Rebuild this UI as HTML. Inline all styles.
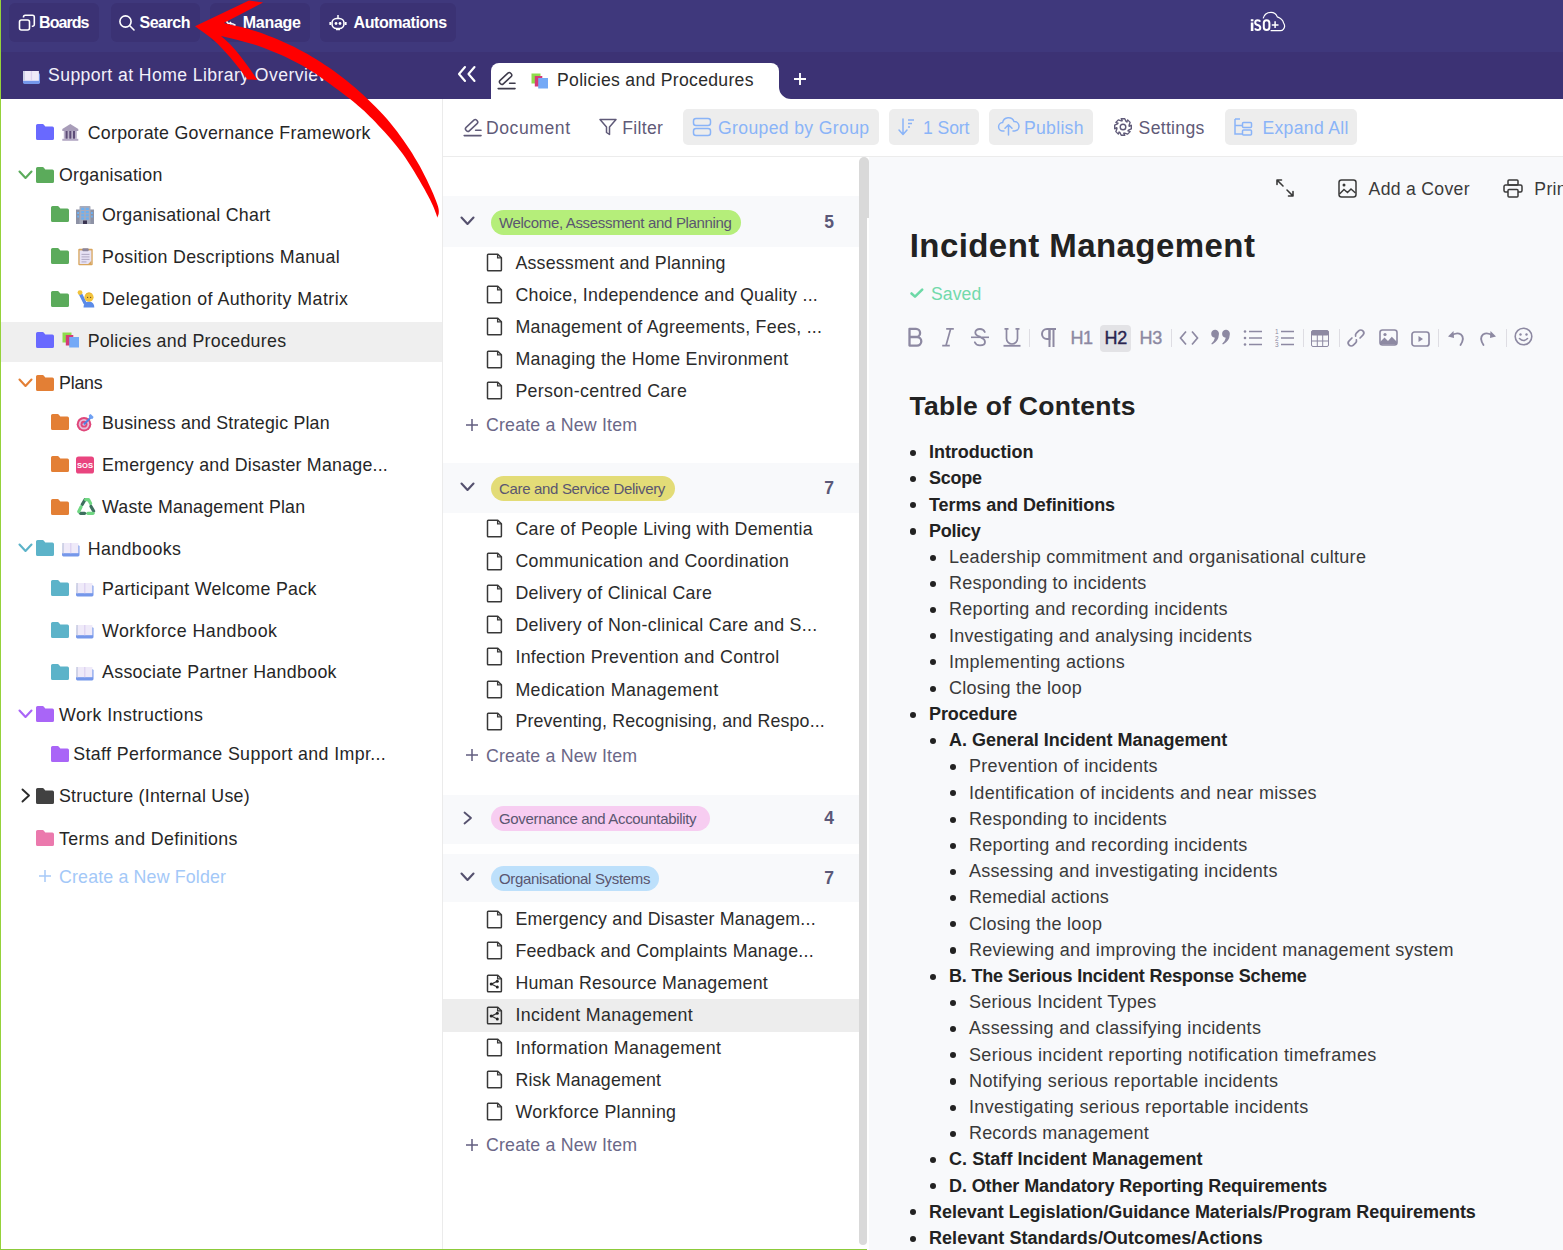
<!DOCTYPE html>
<html><head><meta charset="utf-8"><title>Incident Management</title>
<style>
html,body{margin:0;padding:0;width:1563px;height:1250px;overflow:hidden;background:#fff;}
body{position:relative;font-family:"Liberation Sans", sans-serif;}
.t{position:absolute;white-space:nowrap;font-family:"Liberation Sans", sans-serif;}
.b{position:absolute;}
svg.b{overflow:visible;}
</style></head><body>
<div class="b" style="left:0.0px;top:0.0px;width:1563.0px;height:1250.0px;background:#ffffff;"></div>
<div class="b" style="left:869.0px;top:157.0px;width:694.0px;height:1093.0px;background:#f8f9fb;"></div>
<div class="b" style="left:0.0px;top:0.0px;width:1563.0px;height:52.0px;background:#3f387c;"></div>
<div class="b" style="left:0.0px;top:52.0px;width:1563.0px;height:47.0px;background:#3c3274;"></div>
<div class="b" style="left:9.3px;top:2.6px;width:90.2px;height:39.0px;background:#3b3274;border-radius:6px;"></div>
<div class="b" style="left:110.7px;top:2.6px;width:89.1px;height:39.0px;background:#3b3274;border-radius:6px;"></div>
<div class="b" style="left:209.8px;top:2.6px;width:99.9px;height:39.0px;background:#3b3274;border-radius:6px;"></div>
<div class="b" style="left:320.2px;top:2.6px;width:136.2px;height:39.0px;background:#3b3274;border-radius:6px;"></div>
<svg class="b" style="left:18.0px;top:14.0px;" width="18" height="18" viewBox="0 0 18 18"><rect x="1.5" y="6" width="10" height="10" rx="2" fill="none" stroke="#fff" stroke-width="1.6"/><path d="M5.5 3.5 V3 a1.8 1.8 0 0 1 1.8-1.8 H14.5 a1.8 1.8 0 0 1 1.8 1.8 V10.5 a1.8 1.8 0 0 1 -1.8 1.8 H13.8" fill="none" stroke="#fff" stroke-width="1.6"/></svg>
<div class="t" style="left:39.0px;top:14.7px;font-size:16px;line-height:16px;color:#ffffff;font-weight:700;letter-spacing:-0.925px;">Boards</div>
<svg class="b" style="left:118.0px;top:14.0px;" width="18" height="18" viewBox="0 0 18 18"><circle cx="7.5" cy="7.5" r="5.6" fill="none" stroke="#fff" stroke-width="1.6"/><path d="M11.8 11.8 L16 16" stroke="#fff" stroke-width="1.6" stroke-linecap="round"/></svg>
<div class="t" style="left:139.5px;top:14.7px;font-size:16px;line-height:16px;color:#ffffff;font-weight:700;letter-spacing:-0.475px;">Search</div>
<svg class="b" style="left:220.0px;top:14.0px;" width="18" height="18" viewBox="0 0 18 18"><path d="M3 8 q2-3 4 0 q2 3 4 0" fill="none" stroke="#fff" stroke-width="1.5"/><path d="M10 10 q3 -1 5 1 q-2 2 -5 1" fill="none" stroke="#fff" stroke-width="1.5"/></svg>
<div class="t" style="left:242.8px;top:14.7px;font-size:16px;line-height:16px;color:#ffffff;font-weight:700;letter-spacing:-0.296px;">Manage</div>
<svg class="b" style="left:329.0px;top:14.0px;" width="18" height="18" viewBox="0 0 18 18"><path d="M9 1 V4" stroke="#fff" stroke-width="1.5"/><rect x="3" y="4.5" width="12" height="10" rx="4.5" fill="none" stroke="#fff" stroke-width="1.6"/><circle cx="7" cy="9.5" r="1.4" fill="#fff"/><circle cx="11" cy="9.5" r="1.4" fill="#fff"/><path d="M1.2 8 V11 M16.8 8 V11" stroke="#fff" stroke-width="1.6"/><path d="M7 15.5 H11" stroke="#fff" stroke-width="1.5"/></svg>
<div class="t" style="left:353.5px;top:14.7px;font-size:16px;line-height:16px;color:#ffffff;font-weight:700;letter-spacing:-0.418px;">Automations</div>
<svg class="b" style="left:1245px;top:8px" width="45" height="28" viewBox="1245 8 45 28"><rect x="1250.8" y="19.2" width="2.6" height="2.1" fill="#fff"/><rect x="1250.8" y="22.5" width="2.6" height="8.5" fill="#fff"/><path d="M1260.2 21.6 Q1259.6 20.2 1257.7 20.2 Q1255.2 20.2 1255.2 22.5 Q1255.2 24.3 1257.6 25 Q1260.3 25.8 1260.3 27.8 Q1260.3 30 1257.6 30 Q1255.6 30 1255 28.4" fill="none" stroke="#fff" stroke-width="2"/><rect x="1263.8" y="20.2" width="5.6" height="9.8" rx="2.8" fill="none" stroke="#fff" stroke-width="2"/><path d="M1275.1 21.2 V28 M1271.8 25 H1278.5" stroke="#fff" stroke-width="1.5"/><path d="M1263.2 18.4 Q1264.5 12.3 1271 12.3 Q1275.6 12.3 1277.3 16.9 Q1282.6 18.8 1283.6 23 Q1285.8 26.5 1283.3 29.3 Q1282.2 30.6 1280.5 30.6 H1270.6" fill="none" stroke="#fff" stroke-width="1.2"/></svg>
<svg class="b" style="left:23.0px;top:70.5px;" width="17" height="13" viewBox="0 0 17 13"><rect x="0" y="2.2" width="17" height="10.8" rx="1.4" fill="#7597ea"/><rect x="0.2" y="0" width="15.7" height="9.8" fill="#efeaf9"/><rect x="0.2" y="0" width="1.8" height="9.8" fill="#cfd2e6"/><rect x="7.8" y="0" width="1.3" height="9.8" fill="#ddd2f1"/></svg>
<div class="t" style="left:48.0px;top:67.1px;font-size:17.6px;line-height:17.6px;color:#f2f0fa;font-weight:400;letter-spacing:0.429px;">Support at Home Library Overview</div>
<svg class="b" style="left:457.0px;top:65.0px;" width="22" height="18" viewBox="0 0 22 18"><path d="M8 2 L2 9 L8 16 M17.5 2 L11.5 9 L17.5 16" fill="none" stroke="#fff" stroke-width="2.1" stroke-linecap="round" stroke-linejoin="round"/></svg>
<div class="b" style="left:490.5px;top:62.5px;width:288.5px;height:37px;background:#fff;border-radius:8px 8px 0 0;"></div>
<svg class="b" style="left:779.0px;top:87.0px;" width="12" height="12" viewBox="0 0 12 12"><path d="M0 0 V12 H12 A12 12 0 0 1 0 0 Z" fill="#fff"/></svg>
<svg class="b" style="left:494.0px;top:66.0px;" width="28" height="28" viewBox="0 0 28 28"><rect x="-7.3" y="-2.35" width="14.6" height="4.7" rx="2" transform="translate(11.6,12.5) rotate(-43)" fill="none" stroke="#3d3a4a" stroke-width="1.5"/><path d="M15.6 17.3 H21" stroke="#3d3a4a" stroke-width="1.6" stroke-linecap="round"/><path d="M4.2 22.6 H21" stroke="#3d3a4a" stroke-width="1.6" stroke-linecap="round"/></svg>
<svg class="b" style="left:531.0px;top:73.0px;" width="18" height="16" viewBox="0 0 18 16"><rect x="0.5" y="0.5" width="9" height="10" fill="#8fdc4c"/><rect x="3.8" y="3" width="7.5" height="10.5" fill="#d43a78"/><rect x="7.2" y="5" width="9.8" height="10.5" fill="#74a9f6"/></svg>
<div class="t" style="left:557.0px;top:72.1px;font-size:17.6px;line-height:17.6px;color:#2b2b2b;font-weight:400;letter-spacing:0.308px;">Policies and Procedures</div>
<svg class="b" style="left:792.0px;top:70.5px;" width="16" height="16" viewBox="0 0 16 16"><path d="M8 2 V14 M2 8 H14" stroke="#fff" stroke-width="1.9"/></svg>
<div class="b" style="left:442.0px;top:99.0px;width:1.0px;height:1151.0px;background:#ebebeb;"></div>
<div class="b" style="left:1.0px;top:322.0px;width:441.0px;height:40.0px;background:#efefef;"></div>
<svg class="b" style="left:36.2px;top:124.3px;" width="18" height="16" viewBox="0 0 18 16"><path d="M1.6 0 H6.6 Q7.4 0 7.9 0.7 L9.3 2.6 H16.4 Q18 2.6 18 4.2 V14.4 Q18 16 16.4 16 H1.6 Q0 16 0 14.4 V1.6 Q0 0 1.6 0 Z" fill="#6969ff"/></svg>
<svg class="b" style="left:61.7px;top:123.8px;" width="17" height="18" viewBox="0 0 17 18"><path d="M8.3 0 L16.3 5 V7 H0.3 V5 Z" fill="#a89db9"/><rect x="1.8" y="7" width="13" height="7.8" fill="#b9b0c8"/><rect x="3.6" y="7" width="2" height="7.8" fill="#5e4d78"/><rect x="7.3" y="7" width="2" height="7.8" fill="#5e4d78"/><rect x="11" y="7" width="2" height="7.8" fill="#5e4d78"/><rect x="0.3" y="14.8" width="16" height="2" fill="#b3a9c4"/></svg>
<div class="t" style="left:87.7px;top:125.1px;font-size:17.8px;line-height:17.8px;color:#262626;font-weight:400;letter-spacing:0.278px;">Corporate Governance Framework</div>
<svg class="b" style="left:36.2px;top:167.0px;" width="18" height="16" viewBox="0 0 18 16"><path d="M1.6 0 H6.6 Q7.4 0 7.9 0.7 L9.3 2.6 H16.4 Q18 2.6 18 4.2 V14.4 Q18 16 16.4 16 H1.6 Q0 16 0 14.4 V1.6 Q0 0 1.6 0 Z" fill="#5bab5b"/></svg>
<svg class="b" style="left:17.5px;top:169.8px;" width="15" height="10" viewBox="0 0 15 10"><path d="M1.5 1.5 L7.5 8 L13.5 1.5" fill="none" stroke="#5bab5b" stroke-width="2.1" stroke-linecap="round" stroke-linejoin="round"/></svg>
<div class="t" style="left:59.0px;top:167.4px;font-size:17.8px;line-height:17.8px;color:#262626;font-weight:400;letter-spacing:0.225px;">Organisation</div>
<svg class="b" style="left:50.5px;top:206.3px;" width="18" height="16" viewBox="0 0 18 16"><path d="M1.6 0 H6.6 Q7.4 0 7.9 0.7 L9.3 2.6 H16.4 Q18 2.6 18 4.2 V14.4 Q18 16 16.4 16 H1.6 Q0 16 0 14.4 V1.6 Q0 0 1.6 0 Z" fill="#5bab5b"/></svg>
<svg class="b" style="left:76.0px;top:205.8px;" width="18" height="18" viewBox="0 0 18 18"><rect x="0" y="3.5" width="4.5" height="14.5" fill="#8d92a5"/><rect x="13.5" y="3.5" width="4.5" height="14.5" fill="#8d92a5"/><rect x="3.5" y="0" width="11" height="18" rx="0.8" fill="#a7abbb"/><g fill="#6cb0f2"><rect x="5.2" y="1.8" width="3" height="2.2"/><rect x="9.8" y="1.8" width="3" height="2.2"/><rect x="5.2" y="5" width="3" height="2.2"/><rect x="9.8" y="5" width="3" height="2.2"/><rect x="5.2" y="8.2" width="3" height="2.2"/><rect x="9.8" y="8.2" width="3" height="2.2"/><rect x="5.2" y="11.4" width="3" height="2.2"/><rect x="9.8" y="11.4" width="3" height="2.2"/><rect x="1.2" y="6" width="1.8" height="2"/><rect x="1.2" y="9.5" width="1.8" height="2"/><rect x="15" y="6" width="1.8" height="2"/><rect x="15" y="9.5" width="1.8" height="2"/></g><rect x="7" y="14.5" width="4" height="3.5" fill="#3a3450"/></svg>
<div class="t" style="left:102.0px;top:206.7px;font-size:17.8px;line-height:17.8px;color:#262626;font-weight:400;letter-spacing:0.274px;">Organisational Chart</div>
<svg class="b" style="left:50.5px;top:248.0px;" width="18" height="16" viewBox="0 0 18 16"><path d="M1.6 0 H6.6 Q7.4 0 7.9 0.7 L9.3 2.6 H16.4 Q18 2.6 18 4.2 V14.4 Q18 16 16.4 16 H1.6 Q0 16 0 14.4 V1.6 Q0 0 1.6 0 Z" fill="#5bab5b"/></svg>
<svg class="b" style="left:76.5px;top:247.5px;" width="17" height="18" viewBox="0 0 17 18"><rect x="1.3" y="0.8" width="14.4" height="16.5" rx="1" fill="#d8a55c"/><rect x="2.6" y="2.4" width="11.8" height="13.6" fill="#e7e2f4"/><path d="M11.2 16 L14.4 12.8 V16 Z" fill="#d8a55c"/><rect x="5.3" y="0.3" width="6.4" height="3" rx="1" fill="#8b859b"/><path d="M4.5 6.4 H12.5 M4.5 8.9 H12.5 M4.5 11.4 H12.5 M4.5 13.9 H9.5" stroke="#aaa3bd" stroke-width="0.9"/></svg>
<div class="t" style="left:102.0px;top:248.7px;font-size:17.8px;line-height:17.8px;color:#262626;font-weight:400;letter-spacing:0.311px;">Position Descriptions Manual</div>
<svg class="b" style="left:50.5px;top:290.5px;" width="18" height="16" viewBox="0 0 18 16"><path d="M1.6 0 H6.6 Q7.4 0 7.9 0.7 L9.3 2.6 H16.4 Q18 2.6 18 4.2 V14.4 Q18 16 16.4 16 H1.6 Q0 16 0 14.4 V1.6 Q0 0 1.6 0 Z" fill="#5bab5b"/></svg>
<svg class="b" style="left:76.5px;top:290.0px;" width="18" height="18" viewBox="0 0 18 18"><path d="M6.5 17.5 Q6.5 11.8 12 11.5 Q17.3 11.8 17.3 17.5 Z" fill="#5b8be8"/><path d="M3 3 L8 13" stroke="#5b8be8" stroke-width="3.4" stroke-linecap="round"/><circle cx="3" cy="2.6" r="2.4" fill="#f2c33c"/><circle cx="12" cy="7.2" r="4.6" fill="#f2c33c"/><path d="M8 5.5 Q11 1.5 16 4.5 Q15 3 12 2.6 Q9 2.7 8 5.5 Z" fill="#e2a92a"/><circle cx="10.6" cy="7.4" r="0.6" fill="#6b4a2a"/><circle cx="13.6" cy="7.4" r="0.6" fill="#6b4a2a"/></svg>
<div class="t" style="left:102.0px;top:290.9px;font-size:17.8px;line-height:17.8px;color:#262626;font-weight:400;letter-spacing:0.474px;">Delegation of Authority Matrix</div>
<svg class="b" style="left:36.2px;top:332.0px;" width="18" height="16" viewBox="0 0 18 16"><path d="M1.6 0 H6.6 Q7.4 0 7.9 0.7 L9.3 2.6 H16.4 Q18 2.6 18 4.2 V14.4 Q18 16 16.4 16 H1.6 Q0 16 0 14.4 V1.6 Q0 0 1.6 0 Z" fill="#6969ff"/></svg>
<svg class="b" style="left:62.2px;top:332.0px;" width="18" height="16" viewBox="0 0 18 16"><rect x="0.5" y="0.5" width="9" height="10" fill="#8fdc4c"/><rect x="3.8" y="3" width="7.5" height="10.5" fill="#d43a78"/><rect x="7.2" y="5" width="9.8" height="10.5" fill="#74a9f6"/></svg>
<div class="t" style="left:87.7px;top:332.9px;font-size:17.8px;line-height:17.8px;color:#262626;font-weight:400;letter-spacing:0.302px;">Policies and Procedures</div>
<svg class="b" style="left:36.2px;top:375.0px;" width="18" height="16" viewBox="0 0 18 16"><path d="M1.6 0 H6.6 Q7.4 0 7.9 0.7 L9.3 2.6 H16.4 Q18 2.6 18 4.2 V14.4 Q18 16 16.4 16 H1.6 Q0 16 0 14.4 V1.6 Q0 0 1.6 0 Z" fill="#e37f35"/></svg>
<svg class="b" style="left:17.5px;top:377.8px;" width="15" height="10" viewBox="0 0 15 10"><path d="M1.5 1.5 L7.5 8 L13.5 1.5" fill="none" stroke="#e37f35" stroke-width="2.1" stroke-linecap="round" stroke-linejoin="round"/></svg>
<div class="t" style="left:59.0px;top:374.9px;font-size:17.8px;line-height:17.8px;color:#262626;font-weight:400;letter-spacing:-0.196px;">Plans</div>
<svg class="b" style="left:50.5px;top:414.3px;" width="18" height="16" viewBox="0 0 18 16"><path d="M1.6 0 H6.6 Q7.4 0 7.9 0.7 L9.3 2.6 H16.4 Q18 2.6 18 4.2 V14.4 Q18 16 16.4 16 H1.6 Q0 16 0 14.4 V1.6 Q0 0 1.6 0 Z" fill="#e37f35"/></svg>
<svg class="b" style="left:76.0px;top:413.8px;" width="18" height="18" viewBox="0 0 18 18"><circle cx="8" cy="10.2" r="7.3" fill="#e0467a"/><circle cx="8" cy="10.2" r="5.3" fill="#e8bcd8"/><circle cx="8" cy="10.2" r="3.4" fill="#e0467a"/><circle cx="8" cy="10.2" r="1.5" fill="#cdb8dc"/><path d="M8 10.2 L14.5 3.8" stroke="#4f7fe0" stroke-width="2"/><path d="M12.8 1.2 L14.6 0 L17.6 3 L16.4 5 L13.2 4.6 Z" fill="#6ea0f3"/></svg>
<div class="t" style="left:102.0px;top:415.3px;font-size:17.8px;line-height:17.8px;color:#262626;font-weight:400;letter-spacing:0.200px;">Business and Strategic Plan</div>
<svg class="b" style="left:50.5px;top:456.3px;" width="18" height="16" viewBox="0 0 18 16"><path d="M1.6 0 H6.6 Q7.4 0 7.9 0.7 L9.3 2.6 H16.4 Q18 2.6 18 4.2 V14.4 Q18 16 16.4 16 H1.6 Q0 16 0 14.4 V1.6 Q0 0 1.6 0 Z" fill="#e37f35"/></svg>
<svg class="b" style="left:76.0px;top:455.8px;" width="18" height="18" viewBox="0 0 18 18"><rect x="0" y="0.5" width="18" height="17" rx="2.6" fill="#e9457f"/><text x="9" y="12.1" text-anchor="middle" font-family="Liberation Sans" font-weight="700" font-size="7.6" fill="#fff">SOS</text></svg>
<div class="t" style="left:102.0px;top:457.3px;font-size:17.8px;line-height:17.8px;color:#262626;font-weight:400;letter-spacing:0.228px;">Emergency and Disaster Manage...</div>
<svg class="b" style="left:50.5px;top:498.7px;" width="18" height="16" viewBox="0 0 18 16"><path d="M1.6 0 H6.6 Q7.4 0 7.9 0.7 L9.3 2.6 H16.4 Q18 2.6 18 4.2 V14.4 Q18 16 16.4 16 H1.6 Q0 16 0 14.4 V1.6 Q0 0 1.6 0 Z" fill="#e37f35"/></svg>
<svg class="b" style="left:76.5px;top:498.2px;" width="18" height="18" viewBox="0 0 18 18"><path d="M5.2 6.5 L8 1.8" stroke="#3d6f5e" stroke-width="3.2" stroke-linecap="round"/><path d="M8.6 1.6 L11.5 1.6 L13.6 5.6" stroke="#6fd782" stroke-width="3.2" stroke-linecap="round" stroke-linejoin="round"/><path d="M14 8.5 L16.6 13" stroke="#3d6f5e" stroke-width="3.2" stroke-linecap="round"/><path d="M16 15.3 L10.8 15.3" stroke="#6fd782" stroke-width="3.2" stroke-linecap="round"/><path d="M7.6 15.3 L3.5 15.3" stroke="#3d6f5e" stroke-width="3.2" stroke-linecap="round"/><path d="M1.8 13.5 L4 9" stroke="#6fd782" stroke-width="3.2" stroke-linecap="round"/></svg>
<div class="t" style="left:102.0px;top:499.3px;font-size:17.8px;line-height:17.8px;color:#262626;font-weight:400;letter-spacing:0.205px;">Waste Management Plan</div>
<svg class="b" style="left:36.2px;top:540.3px;" width="18" height="16" viewBox="0 0 18 16"><path d="M1.6 0 H6.6 Q7.4 0 7.9 0.7 L9.3 2.6 H16.4 Q18 2.6 18 4.2 V14.4 Q18 16 16.4 16 H1.6 Q0 16 0 14.4 V1.6 Q0 0 1.6 0 Z" fill="#5cb3c9"/></svg>
<svg class="b" style="left:17.5px;top:543.1px;" width="15" height="10" viewBox="0 0 15 10"><path d="M1.5 1.5 L7.5 8 L13.5 1.5" fill="none" stroke="#5cb3c9" stroke-width="2.1" stroke-linecap="round" stroke-linejoin="round"/></svg>
<svg class="b" style="left:61.9px;top:543.3px;" width="17.5" height="13.4" viewBox="0 0 17.5 13.4"><rect x="0" y="2.2" width="17.5" height="11.2" rx="1.4" fill="#7597ea"/><rect x="0.2" y="0" width="16.2" height="10.2" fill="#efeaf9"/><rect x="0.2" y="0" width="1.8" height="10.2" fill="#cfd2e6"/><rect x="8.1" y="0" width="1.3" height="10.2" fill="#ddd2f1"/></svg>
<div class="t" style="left:87.7px;top:540.5px;font-size:17.8px;line-height:17.8px;color:#262626;font-weight:400;letter-spacing:0.416px;">Handbooks</div>
<svg class="b" style="left:50.5px;top:580.2px;" width="18" height="16" viewBox="0 0 18 16"><path d="M1.6 0 H6.6 Q7.4 0 7.9 0.7 L9.3 2.6 H16.4 Q18 2.6 18 4.2 V14.4 Q18 16 16.4 16 H1.6 Q0 16 0 14.4 V1.6 Q0 0 1.6 0 Z" fill="#5cb3c9"/></svg>
<svg class="b" style="left:76.2px;top:583.2px;" width="17.5" height="13.4" viewBox="0 0 17.5 13.4"><rect x="0" y="2.2" width="17.5" height="11.2" rx="1.4" fill="#7597ea"/><rect x="0.2" y="0" width="16.2" height="10.2" fill="#efeaf9"/><rect x="0.2" y="0" width="1.8" height="10.2" fill="#cfd2e6"/><rect x="8.1" y="0" width="1.3" height="10.2" fill="#ddd2f1"/></svg>
<div class="t" style="left:102.0px;top:580.9px;font-size:17.8px;line-height:17.8px;color:#262626;font-weight:400;letter-spacing:0.313px;">Participant Welcome Pack</div>
<svg class="b" style="left:50.5px;top:622.2px;" width="18" height="16" viewBox="0 0 18 16"><path d="M1.6 0 H6.6 Q7.4 0 7.9 0.7 L9.3 2.6 H16.4 Q18 2.6 18 4.2 V14.4 Q18 16 16.4 16 H1.6 Q0 16 0 14.4 V1.6 Q0 0 1.6 0 Z" fill="#5cb3c9"/></svg>
<svg class="b" style="left:76.2px;top:625.2px;" width="17.5" height="13.4" viewBox="0 0 17.5 13.4"><rect x="0" y="2.2" width="17.5" height="11.2" rx="1.4" fill="#7597ea"/><rect x="0.2" y="0" width="16.2" height="10.2" fill="#efeaf9"/><rect x="0.2" y="0" width="1.8" height="10.2" fill="#cfd2e6"/><rect x="8.1" y="0" width="1.3" height="10.2" fill="#ddd2f1"/></svg>
<div class="t" style="left:102.0px;top:622.5px;font-size:17.8px;line-height:17.8px;color:#262626;font-weight:400;letter-spacing:0.482px;">Workforce Handbook</div>
<svg class="b" style="left:50.5px;top:663.9px;" width="18" height="16" viewBox="0 0 18 16"><path d="M1.6 0 H6.6 Q7.4 0 7.9 0.7 L9.3 2.6 H16.4 Q18 2.6 18 4.2 V14.4 Q18 16 16.4 16 H1.6 Q0 16 0 14.4 V1.6 Q0 0 1.6 0 Z" fill="#5cb3c9"/></svg>
<svg class="b" style="left:76.2px;top:666.9px;" width="17.5" height="13.4" viewBox="0 0 17.5 13.4"><rect x="0" y="2.2" width="17.5" height="11.2" rx="1.4" fill="#7597ea"/><rect x="0.2" y="0" width="16.2" height="10.2" fill="#efeaf9"/><rect x="0.2" y="0" width="1.8" height="10.2" fill="#cfd2e6"/><rect x="8.1" y="0" width="1.3" height="10.2" fill="#ddd2f1"/></svg>
<div class="t" style="left:102.0px;top:664.4px;font-size:17.8px;line-height:17.8px;color:#262626;font-weight:400;letter-spacing:0.326px;">Associate Partner Handbook</div>
<svg class="b" style="left:36.2px;top:706.2px;" width="18" height="16" viewBox="0 0 18 16"><path d="M1.6 0 H6.6 Q7.4 0 7.9 0.7 L9.3 2.6 H16.4 Q18 2.6 18 4.2 V14.4 Q18 16 16.4 16 H1.6 Q0 16 0 14.4 V1.6 Q0 0 1.6 0 Z" fill="#a965f7"/></svg>
<svg class="b" style="left:17.5px;top:709.0px;" width="15" height="10" viewBox="0 0 15 10"><path d="M1.5 1.5 L7.5 8 L13.5 1.5" fill="none" stroke="#a965f7" stroke-width="2.1" stroke-linecap="round" stroke-linejoin="round"/></svg>
<div class="t" style="left:59.0px;top:706.6px;font-size:17.8px;line-height:17.8px;color:#262626;font-weight:400;letter-spacing:0.429px;">Work Instructions</div>
<svg class="b" style="left:50.5px;top:746.2px;" width="18" height="16" viewBox="0 0 18 16"><path d="M1.6 0 H6.6 Q7.4 0 7.9 0.7 L9.3 2.6 H16.4 Q18 2.6 18 4.2 V14.4 Q18 16 16.4 16 H1.6 Q0 16 0 14.4 V1.6 Q0 0 1.6 0 Z" fill="#a965f7"/></svg>
<div class="t" style="left:73.3px;top:746.4px;font-size:17.8px;line-height:17.8px;color:#262626;font-weight:400;letter-spacing:0.371px;">Staff Performance Support and Impr...</div>
<svg class="b" style="left:36.2px;top:787.7px;" width="18" height="16" viewBox="0 0 18 16"><path d="M1.6 0 H6.6 Q7.4 0 7.9 0.7 L9.3 2.6 H16.4 Q18 2.6 18 4.2 V14.4 Q18 16 16.4 16 H1.6 Q0 16 0 14.4 V1.6 Q0 0 1.6 0 Z" fill="#414141"/></svg>
<svg class="b" style="left:21.0px;top:788.2px;" width="10" height="15" viewBox="0 0 10 15"><path d="M1.5 1.5 L8 7.5 L1.5 13.5" fill="none" stroke="#2b2b2b" stroke-width="1.9" stroke-linecap="round" stroke-linejoin="round"/></svg>
<div class="t" style="left:59.0px;top:788.1px;font-size:17.8px;line-height:17.8px;color:#262626;font-weight:400;letter-spacing:0.252px;">Structure (Internal Use)</div>
<svg class="b" style="left:36.2px;top:830.4px;" width="18" height="16" viewBox="0 0 18 16"><path d="M1.6 0 H6.6 Q7.4 0 7.9 0.7 L9.3 2.6 H16.4 Q18 2.6 18 4.2 V14.4 Q18 16 16.4 16 H1.6 Q0 16 0 14.4 V1.6 Q0 0 1.6 0 Z" fill="#eb79ad"/></svg>
<div class="t" style="left:59.0px;top:831.2px;font-size:17.8px;line-height:17.8px;color:#262626;font-weight:400;letter-spacing:0.376px;">Terms and Definitions</div>
<svg class="b" style="left:38.0px;top:869.0px;" width="14" height="14" viewBox="0 0 14 14"><path d="M7 1 V13 M1 7 H13" stroke="#a7c9f7" stroke-width="1.5"/></svg>
<div class="t" style="left:59.0px;top:868.5px;font-size:17.8px;line-height:17.8px;color:#a3c8f8;font-weight:400;letter-spacing:0.163px;">Create a New Folder</div>
<div class="b" style="left:443.0px;top:156.0px;width:1120.0px;height:1.0px;background:#ececec;"></div>
<svg class="b" style="left:459.7px;top:112.6px;" width="28" height="28" viewBox="0 0 28 28"><rect x="-7.3" y="-2.35" width="14.6" height="4.7" rx="2" transform="translate(11.6,12.5) rotate(-43)" fill="none" stroke="#5f5a78" stroke-width="1.5"/><path d="M15.6 17.3 H21" stroke="#5f5a78" stroke-width="1.6" stroke-linecap="round"/><path d="M4.2 22.6 H21" stroke="#5f5a78" stroke-width="1.6" stroke-linecap="round"/></svg>
<div class="t" style="left:486.0px;top:120.4px;font-size:17.6px;line-height:17.6px;color:#5f5a78;font-weight:400;letter-spacing:0.559px;">Document</div>
<svg class="b" style="left:598.0px;top:117.0px;" width="20" height="20" viewBox="0 0 20 20"><path d="M2 2.5 H18 L11.5 10 V17.5 L8.5 15.5 V10 Z" fill="none" stroke="#5f5a78" stroke-width="1.5" stroke-linejoin="round"/></svg>
<div class="t" style="left:622.3px;top:120.4px;font-size:17.6px;line-height:17.6px;color:#5f5a78;font-weight:400;letter-spacing:0.318px;">Filter</div>
<div class="b" style="left:683.0px;top:109.0px;width:195.5px;height:36.0px;background:#ededed;border-radius:5px;"></div>
<svg class="b" style="left:692.0px;top:117.0px;" width="20" height="20" viewBox="0 0 20 20"><rect x="1.5" y="1.5" width="17" height="7" rx="2.5" fill="none" stroke="#8ab4f8" stroke-width="1.5"/><rect x="1.5" y="11.5" width="17" height="7" rx="2.5" fill="none" stroke="#8ab4f8" stroke-width="1.5"/></svg>
<div class="t" style="left:718.0px;top:120.4px;font-size:17.6px;line-height:17.6px;color:#8ab4f8;font-weight:400;letter-spacing:0.358px;">Grouped by Group</div>
<div class="b" style="left:888.8px;top:109.4px;width:90.2px;height:36.0px;background:#ededed;border-radius:5px;"></div>
<svg class="b" style="left:897.0px;top:117.0px;" width="20" height="20" viewBox="0 0 20 20"><path d="M6 2 V17 M2 13 L6 17.5 L10 13" fill="none" stroke="#8ab4f8" stroke-width="1.5" stroke-linecap="round" stroke-linejoin="round"/><path d="M11 3 H17 M11 6.5 H15 M11 10 H13" stroke="#8ab4f8" stroke-width="1.5"/></svg>
<div class="t" style="left:923.0px;top:120.4px;font-size:17.6px;line-height:17.6px;color:#8ab4f8;font-weight:400;letter-spacing:-0.091px;">1 Sort</div>
<div class="b" style="left:989.0px;top:109.4px;width:104.0px;height:36.0px;background:#ededed;border-radius:5px;"></div>
<svg class="b" style="left:998.0px;top:116.0px;" width="22" height="20" viewBox="0 0 22 20"><path d="M6 15 H5 A4.2 4.2 0 0 1 4.6 6.6 A6 6 0 0 1 16 5.5 A4.6 4.6 0 0 1 16.5 15 H15" fill="none" stroke="#8ab4f8" stroke-width="1.5" stroke-linecap="round"/><path d="M10.5 19 V9 M7 12.3 L10.5 8.8 L14 12.3" fill="none" stroke="#8ab4f8" stroke-width="1.5" stroke-linecap="round" stroke-linejoin="round"/></svg>
<div class="t" style="left:1024.0px;top:120.4px;font-size:17.6px;line-height:17.6px;color:#8ab4f8;font-weight:400;letter-spacing:0.297px;">Publish</div>
<svg class="b" style="left:1113.0px;top:117.0px;" width="20" height="20" viewBox="0 0 20 20"><path d="M18.31 8.23 L18.31 11.77 L15.49 13.09 L14.96 13.89 L17.13 14.63 L14.63 17.13 L11.70 16.07 L10.75 16.25 L11.77 18.31 L8.23 18.31 L6.91 15.49 L6.11 14.96 L5.37 17.13 L2.87 14.63 L3.93 11.70 L3.75 10.75 L1.69 11.77 L1.69 8.23 L4.51 6.91 L5.04 6.11 L2.87 5.37 L5.37 2.87 L8.30 3.93 L9.25 3.75 L8.23 1.69 L11.77 1.69 L13.09 4.51 L13.89 5.04 L14.63 2.87 L17.13 5.37 L16.07 8.30 L16.25 9.25 Z" fill="none" stroke="#5f5a78" stroke-width="1.4" stroke-linejoin="round"/><circle cx="10" cy="10" r="2.8" fill="none" stroke="#5f5a78" stroke-width="1.4"/></svg>
<div class="t" style="left:1138.6px;top:120.4px;font-size:17.6px;line-height:17.6px;color:#5f5a78;font-weight:400;letter-spacing:0.303px;">Settings</div>
<div class="b" style="left:1224.8px;top:109.4px;width:132.6px;height:36.0px;background:#ededed;border-radius:5px;"></div>
<svg class="b" style="left:1233.0px;top:117.0px;" width="21" height="20" viewBox="0 0 21 20"><path d="M2 2 V17 H9 M2 8.5 H9" fill="none" stroke="#8ab4f8" stroke-width="1.5"/><rect x="9.5" y="5.5" width="9" height="5" rx="1" fill="none" stroke="#8ab4f8" stroke-width="1.5"/><rect x="9.5" y="13" width="9" height="5" rx="1" fill="none" stroke="#8ab4f8" stroke-width="1.5"/><path d="M2 2 H7" stroke="#8ab4f8" stroke-width="1.5"/></svg>
<div class="t" style="left:1262.4px;top:120.4px;font-size:17.6px;line-height:17.6px;color:#8ab4f8;font-weight:400;letter-spacing:0.329px;">Expand All</div>
<div class="b" style="left:443.0px;top:999.2px;width:415.5px;height:32.6px;background:#ededed;"></div>
<div class="b" style="left:443.0px;top:196.0px;width:415.5px;height:50.5px;background:#f8f9fb;"></div>
<svg class="b" style="left:459.5px;top:215.7px;" width="15" height="10" viewBox="0 0 15 10"><path d="M1.5 1.5 L7.5 8 L13.5 1.5" fill="none" stroke="#55516e" stroke-width="2.1" stroke-linecap="round" stroke-linejoin="round"/></svg>
<div class="b" style="left:490.5px;top:210.0px;width:250.5px;height:25.0px;background:#b5ee7a;border-radius:13px;"></div>
<div class="t" style="left:499.0px;top:214.7px;font-size:15px;line-height:15px;color:#5a5670;font-weight:400;letter-spacing:-0.33px;">Welcome, Assessment and Planning</div>
<div class="t" style="left:824.3px;top:213.8px;font-size:17.5px;line-height:17.5px;color:#5b5878;font-weight:700;letter-spacing:0px;">5</div>
<svg class="b" style="left:485.5px;top:253.1px;" width="17" height="19" viewBox="0 0 17 19"><path d="M2.3 1.2 H11.8 L15.4 4.8 V16.9 Q15.4 17.7 14.6 17.7 H2.3 Q1.5 17.7 1.5 16.9 V2 Q1.5 1.2 2.3 1.2 Z" fill="none" stroke="#383838" stroke-width="1.5" stroke-linejoin="round"/><path d="M11.6 1.4 V4.8 H15.2" fill="none" stroke="#383838" stroke-width="1.3"/></svg>
<div class="t" style="left:515.4px;top:254.6px;font-size:17.8px;line-height:17.8px;color:#2b2b2b;font-weight:400;letter-spacing:0.204px;">Assessment and Planning</div>
<svg class="b" style="left:485.5px;top:285.4px;" width="17" height="19" viewBox="0 0 17 19"><path d="M2.3 1.2 H11.8 L15.4 4.8 V16.9 Q15.4 17.7 14.6 17.7 H2.3 Q1.5 17.7 1.5 16.9 V2 Q1.5 1.2 2.3 1.2 Z" fill="none" stroke="#383838" stroke-width="1.5" stroke-linejoin="round"/><path d="M11.6 1.4 V4.8 H15.2" fill="none" stroke="#383838" stroke-width="1.3"/></svg>
<div class="t" style="left:515.4px;top:286.9px;font-size:17.8px;line-height:17.8px;color:#2b2b2b;font-weight:400;letter-spacing:0.280px;">Choice, Independence and Quality ...</div>
<svg class="b" style="left:485.5px;top:317.4px;" width="17" height="19" viewBox="0 0 17 19"><path d="M2.3 1.2 H11.8 L15.4 4.8 V16.9 Q15.4 17.7 14.6 17.7 H2.3 Q1.5 17.7 1.5 16.9 V2 Q1.5 1.2 2.3 1.2 Z" fill="none" stroke="#383838" stroke-width="1.5" stroke-linejoin="round"/><path d="M11.6 1.4 V4.8 H15.2" fill="none" stroke="#383838" stroke-width="1.3"/></svg>
<div class="t" style="left:515.4px;top:318.9px;font-size:17.8px;line-height:17.8px;color:#2b2b2b;font-weight:400;letter-spacing:0.268px;">Management of Agreements, Fees, ...</div>
<svg class="b" style="left:485.5px;top:349.8px;" width="17" height="19" viewBox="0 0 17 19"><path d="M2.3 1.2 H11.8 L15.4 4.8 V16.9 Q15.4 17.7 14.6 17.7 H2.3 Q1.5 17.7 1.5 16.9 V2 Q1.5 1.2 2.3 1.2 Z" fill="none" stroke="#383838" stroke-width="1.5" stroke-linejoin="round"/><path d="M11.6 1.4 V4.8 H15.2" fill="none" stroke="#383838" stroke-width="1.3"/></svg>
<div class="t" style="left:515.4px;top:351.3px;font-size:17.8px;line-height:17.8px;color:#2b2b2b;font-weight:400;letter-spacing:0.282px;">Managing the Home Environment</div>
<svg class="b" style="left:485.5px;top:381.2px;" width="17" height="19" viewBox="0 0 17 19"><path d="M2.3 1.2 H11.8 L15.4 4.8 V16.9 Q15.4 17.7 14.6 17.7 H2.3 Q1.5 17.7 1.5 16.9 V2 Q1.5 1.2 2.3 1.2 Z" fill="none" stroke="#383838" stroke-width="1.5" stroke-linejoin="round"/><path d="M11.6 1.4 V4.8 H15.2" fill="none" stroke="#383838" stroke-width="1.3"/></svg>
<div class="t" style="left:515.4px;top:382.7px;font-size:17.8px;line-height:17.8px;color:#2b2b2b;font-weight:400;letter-spacing:0.352px;">Person-centred Care</div>
<svg class="b" style="left:465.0px;top:418.0px;" width="14" height="14" viewBox="0 0 14 14"><path d="M7 1 V13 M1 7 H13" stroke="#625e80" stroke-width="1.5"/></svg>
<div class="t" style="left:486.0px;top:417.4px;font-size:17.8px;line-height:17.8px;color:#6b6787;font-weight:400;letter-spacing:0.173px;">Create a New Item</div>
<div class="b" style="left:443.0px;top:463.0px;width:415.5px;height:50.0px;background:#f8f9fb;"></div>
<svg class="b" style="left:459.5px;top:482.0px;" width="15" height="10" viewBox="0 0 15 10"><path d="M1.5 1.5 L7.5 8 L13.5 1.5" fill="none" stroke="#55516e" stroke-width="2.1" stroke-linecap="round" stroke-linejoin="round"/></svg>
<div class="b" style="left:490.5px;top:476.3px;width:184.5px;height:25.0px;background:#e3dc77;border-radius:13px;"></div>
<div class="t" style="left:499.0px;top:481.0px;font-size:15px;line-height:15px;color:#5a5670;font-weight:400;letter-spacing:-0.33px;">Care and Service Delivery</div>
<div class="t" style="left:824.3px;top:480.1px;font-size:17.5px;line-height:17.5px;color:#5b5878;font-weight:700;letter-spacing:0px;">7</div>
<svg class="b" style="left:485.5px;top:519.1px;" width="17" height="19" viewBox="0 0 17 19"><path d="M2.3 1.2 H11.8 L15.4 4.8 V16.9 Q15.4 17.7 14.6 17.7 H2.3 Q1.5 17.7 1.5 16.9 V2 Q1.5 1.2 2.3 1.2 Z" fill="none" stroke="#383838" stroke-width="1.5" stroke-linejoin="round"/><path d="M11.6 1.4 V4.8 H15.2" fill="none" stroke="#383838" stroke-width="1.3"/></svg>
<div class="t" style="left:515.4px;top:520.6px;font-size:17.8px;line-height:17.8px;color:#2b2b2b;font-weight:400;letter-spacing:0.282px;">Care of People Living with Dementia</div>
<svg class="b" style="left:485.5px;top:551.6px;" width="17" height="19" viewBox="0 0 17 19"><path d="M2.3 1.2 H11.8 L15.4 4.8 V16.9 Q15.4 17.7 14.6 17.7 H2.3 Q1.5 17.7 1.5 16.9 V2 Q1.5 1.2 2.3 1.2 Z" fill="none" stroke="#383838" stroke-width="1.5" stroke-linejoin="round"/><path d="M11.6 1.4 V4.8 H15.2" fill="none" stroke="#383838" stroke-width="1.3"/></svg>
<div class="t" style="left:515.4px;top:553.1px;font-size:17.8px;line-height:17.8px;color:#2b2b2b;font-weight:400;letter-spacing:0.331px;">Communication and Coordination</div>
<svg class="b" style="left:485.5px;top:583.6px;" width="17" height="19" viewBox="0 0 17 19"><path d="M2.3 1.2 H11.8 L15.4 4.8 V16.9 Q15.4 17.7 14.6 17.7 H2.3 Q1.5 17.7 1.5 16.9 V2 Q1.5 1.2 2.3 1.2 Z" fill="none" stroke="#383838" stroke-width="1.5" stroke-linejoin="round"/><path d="M11.6 1.4 V4.8 H15.2" fill="none" stroke="#383838" stroke-width="1.3"/></svg>
<div class="t" style="left:515.4px;top:585.1px;font-size:17.8px;line-height:17.8px;color:#2b2b2b;font-weight:400;letter-spacing:0.282px;">Delivery of Clinical Care</div>
<svg class="b" style="left:485.5px;top:615.4px;" width="17" height="19" viewBox="0 0 17 19"><path d="M2.3 1.2 H11.8 L15.4 4.8 V16.9 Q15.4 17.7 14.6 17.7 H2.3 Q1.5 17.7 1.5 16.9 V2 Q1.5 1.2 2.3 1.2 Z" fill="none" stroke="#383838" stroke-width="1.5" stroke-linejoin="round"/><path d="M11.6 1.4 V4.8 H15.2" fill="none" stroke="#383838" stroke-width="1.3"/></svg>
<div class="t" style="left:515.4px;top:616.9px;font-size:17.8px;line-height:17.8px;color:#2b2b2b;font-weight:400;letter-spacing:0.304px;">Delivery of Non-clinical Care and S...</div>
<svg class="b" style="left:485.5px;top:647.4px;" width="17" height="19" viewBox="0 0 17 19"><path d="M2.3 1.2 H11.8 L15.4 4.8 V16.9 Q15.4 17.7 14.6 17.7 H2.3 Q1.5 17.7 1.5 16.9 V2 Q1.5 1.2 2.3 1.2 Z" fill="none" stroke="#383838" stroke-width="1.5" stroke-linejoin="round"/><path d="M11.6 1.4 V4.8 H15.2" fill="none" stroke="#383838" stroke-width="1.3"/></svg>
<div class="t" style="left:515.4px;top:648.9px;font-size:17.8px;line-height:17.8px;color:#2b2b2b;font-weight:400;letter-spacing:0.315px;">Infection Prevention and Control</div>
<svg class="b" style="left:485.5px;top:680.4px;" width="17" height="19" viewBox="0 0 17 19"><path d="M2.3 1.2 H11.8 L15.4 4.8 V16.9 Q15.4 17.7 14.6 17.7 H2.3 Q1.5 17.7 1.5 16.9 V2 Q1.5 1.2 2.3 1.2 Z" fill="none" stroke="#383838" stroke-width="1.5" stroke-linejoin="round"/><path d="M11.6 1.4 V4.8 H15.2" fill="none" stroke="#383838" stroke-width="1.3"/></svg>
<div class="t" style="left:515.4px;top:681.9px;font-size:17.8px;line-height:17.8px;color:#2b2b2b;font-weight:400;letter-spacing:0.399px;">Medication Management</div>
<svg class="b" style="left:485.5px;top:711.8px;" width="17" height="19" viewBox="0 0 17 19"><path d="M2.3 1.2 H11.8 L15.4 4.8 V16.9 Q15.4 17.7 14.6 17.7 H2.3 Q1.5 17.7 1.5 16.9 V2 Q1.5 1.2 2.3 1.2 Z" fill="none" stroke="#383838" stroke-width="1.5" stroke-linejoin="round"/><path d="M11.6 1.4 V4.8 H15.2" fill="none" stroke="#383838" stroke-width="1.3"/></svg>
<div class="t" style="left:515.4px;top:713.3px;font-size:17.8px;line-height:17.8px;color:#2b2b2b;font-weight:400;letter-spacing:0.165px;">Preventing, Recognising, and Respo...</div>
<svg class="b" style="left:465.0px;top:748.1px;" width="14" height="14" viewBox="0 0 14 14"><path d="M7 1 V13 M1 7 H13" stroke="#625e80" stroke-width="1.5"/></svg>
<div class="t" style="left:486.0px;top:747.5px;font-size:17.8px;line-height:17.8px;color:#6b6787;font-weight:400;letter-spacing:0.173px;">Create a New Item</div>
<div class="b" style="left:443.0px;top:794.6px;width:415.5px;height:49.4px;background:#f8f9fb;"></div>
<svg class="b" style="left:462.5px;top:810.6px;" width="10" height="14" viewBox="0 0 10 14"><path d="M1.5 1.5 L8 7.0 L1.5 12.5" fill="none" stroke="#55516e" stroke-width="1.8" stroke-linecap="round" stroke-linejoin="round"/></svg>
<div class="b" style="left:490.5px;top:806.4px;width:219.0px;height:25.0px;background:#f7cdf1;border-radius:13px;"></div>
<div class="t" style="left:499.0px;top:811.1px;font-size:15px;line-height:15px;color:#5a5670;font-weight:400;letter-spacing:-0.33px;">Governance and Accountability</div>
<div class="t" style="left:824.3px;top:810.2px;font-size:17.5px;line-height:17.5px;color:#5b5878;font-weight:700;letter-spacing:0px;">4</div>
<div class="b" style="left:443.0px;top:854.0px;width:415.5px;height:48.0px;background:#f8f9fb;"></div>
<svg class="b" style="left:459.5px;top:871.7px;" width="15" height="10" viewBox="0 0 15 10"><path d="M1.5 1.5 L7.5 8 L13.5 1.5" fill="none" stroke="#55516e" stroke-width="2.1" stroke-linecap="round" stroke-linejoin="round"/></svg>
<div class="b" style="left:490.5px;top:866.0px;width:168.5px;height:25.0px;background:#bde0fb;border-radius:13px;"></div>
<div class="t" style="left:499.0px;top:870.7px;font-size:15px;line-height:15px;color:#5a5670;font-weight:400;letter-spacing:-0.33px;">Organisational Systems</div>
<div class="t" style="left:824.3px;top:869.8px;font-size:17.5px;line-height:17.5px;color:#5b5878;font-weight:700;letter-spacing:0px;">7</div>
<svg class="b" style="left:485.5px;top:909.6px;" width="17" height="19" viewBox="0 0 17 19"><path d="M2.3 1.2 H11.8 L15.4 4.8 V16.9 Q15.4 17.7 14.6 17.7 H2.3 Q1.5 17.7 1.5 16.9 V2 Q1.5 1.2 2.3 1.2 Z" fill="none" stroke="#383838" stroke-width="1.5" stroke-linejoin="round"/><path d="M11.6 1.4 V4.8 H15.2" fill="none" stroke="#383838" stroke-width="1.3"/></svg>
<div class="t" style="left:515.4px;top:911.1px;font-size:17.8px;line-height:17.8px;color:#2b2b2b;font-weight:400;letter-spacing:0.208px;">Emergency and Disaster Managem...</div>
<svg class="b" style="left:485.5px;top:941.4px;" width="17" height="19" viewBox="0 0 17 19"><path d="M2.3 1.2 H11.8 L15.4 4.8 V16.9 Q15.4 17.7 14.6 17.7 H2.3 Q1.5 17.7 1.5 16.9 V2 Q1.5 1.2 2.3 1.2 Z" fill="none" stroke="#383838" stroke-width="1.5" stroke-linejoin="round"/><path d="M11.6 1.4 V4.8 H15.2" fill="none" stroke="#383838" stroke-width="1.3"/></svg>
<div class="t" style="left:515.4px;top:942.9px;font-size:17.8px;line-height:17.8px;color:#2b2b2b;font-weight:400;letter-spacing:0.240px;">Feedback and Complaints Manage...</div>
<svg class="b" style="left:485.5px;top:973.9px;" width="17" height="19" viewBox="0 0 17 19"><path d="M2.3 1.2 H11.8 L15.4 4.8 V16.9 Q15.4 17.7 14.6 17.7 H2.3 Q1.5 17.7 1.5 16.9 V2 Q1.5 1.2 2.3 1.2 Z" fill="none" stroke="#383838" stroke-width="1.5" stroke-linejoin="round"/><path d="M11.6 1.4 V4.8 H15.2" fill="none" stroke="#383838" stroke-width="1.3"/><path d="M11.3 7.2 L5.3 10.1 L11.3 13" fill="none" stroke="#333" stroke-width="1.2"/><circle cx="11.3" cy="7.2" r="1.5" fill="#222"/><circle cx="5.2" cy="10.1" r="1.5" fill="#222"/><circle cx="11.3" cy="13" r="1.5" fill="#222"/></svg>
<div class="t" style="left:515.4px;top:975.4px;font-size:17.8px;line-height:17.8px;color:#2b2b2b;font-weight:400;letter-spacing:0.217px;">Human Resource Management</div>
<svg class="b" style="left:485.5px;top:1005.9px;" width="17" height="19" viewBox="0 0 17 19"><path d="M2.3 1.2 H11.8 L15.4 4.8 V16.9 Q15.4 17.7 14.6 17.7 H2.3 Q1.5 17.7 1.5 16.9 V2 Q1.5 1.2 2.3 1.2 Z" fill="none" stroke="#383838" stroke-width="1.5" stroke-linejoin="round"/><path d="M11.6 1.4 V4.8 H15.2" fill="none" stroke="#383838" stroke-width="1.3"/><path d="M11.3 7.2 L5.3 10.1 L11.3 13" fill="none" stroke="#333" stroke-width="1.2"/><circle cx="11.3" cy="7.2" r="1.5" fill="#222"/><circle cx="5.2" cy="10.1" r="1.5" fill="#222"/><circle cx="11.3" cy="13" r="1.5" fill="#222"/></svg>
<div class="t" style="left:515.4px;top:1007.4px;font-size:17.8px;line-height:17.8px;color:#2b2b2b;font-weight:400;letter-spacing:0.355px;">Incident Management</div>
<svg class="b" style="left:485.5px;top:1038.2px;" width="17" height="19" viewBox="0 0 17 19"><path d="M2.3 1.2 H11.8 L15.4 4.8 V16.9 Q15.4 17.7 14.6 17.7 H2.3 Q1.5 17.7 1.5 16.9 V2 Q1.5 1.2 2.3 1.2 Z" fill="none" stroke="#383838" stroke-width="1.5" stroke-linejoin="round"/><path d="M11.6 1.4 V4.8 H15.2" fill="none" stroke="#383838" stroke-width="1.3"/></svg>
<div class="t" style="left:515.4px;top:1039.7px;font-size:17.8px;line-height:17.8px;color:#2b2b2b;font-weight:400;letter-spacing:0.372px;">Information Management</div>
<svg class="b" style="left:485.5px;top:1070.4px;" width="17" height="19" viewBox="0 0 17 19"><path d="M2.3 1.2 H11.8 L15.4 4.8 V16.9 Q15.4 17.7 14.6 17.7 H2.3 Q1.5 17.7 1.5 16.9 V2 Q1.5 1.2 2.3 1.2 Z" fill="none" stroke="#383838" stroke-width="1.5" stroke-linejoin="round"/><path d="M11.6 1.4 V4.8 H15.2" fill="none" stroke="#383838" stroke-width="1.3"/></svg>
<div class="t" style="left:515.4px;top:1071.9px;font-size:17.8px;line-height:17.8px;color:#2b2b2b;font-weight:400;letter-spacing:0.163px;">Risk Management</div>
<svg class="b" style="left:485.5px;top:1102.4px;" width="17" height="19" viewBox="0 0 17 19"><path d="M2.3 1.2 H11.8 L15.4 4.8 V16.9 Q15.4 17.7 14.6 17.7 H2.3 Q1.5 17.7 1.5 16.9 V2 Q1.5 1.2 2.3 1.2 Z" fill="none" stroke="#383838" stroke-width="1.5" stroke-linejoin="round"/><path d="M11.6 1.4 V4.8 H15.2" fill="none" stroke="#383838" stroke-width="1.3"/></svg>
<div class="t" style="left:515.4px;top:1103.9px;font-size:17.8px;line-height:17.8px;color:#2b2b2b;font-weight:400;letter-spacing:0.339px;">Workforce Planning</div>
<svg class="b" style="left:465.0px;top:1138.0px;" width="14" height="14" viewBox="0 0 14 14"><path d="M7 1 V13 M1 7 H13" stroke="#625e80" stroke-width="1.5"/></svg>
<div class="t" style="left:486.0px;top:1137.4px;font-size:17.8px;line-height:17.8px;color:#6b6787;font-weight:400;letter-spacing:0.173px;">Create a New Item</div>
<div class="b" style="left:859.2px;top:157.0px;width:9.6px;height:61.0px;background:#d9d9d9;border-radius:5px 5px 0 0;"></div>
<div class="b" style="left:859.2px;top:200.0px;width:7.8px;height:1044.6px;background:#d9d9d9;border-radius:0 0 4px 4px;"></div>
<div class="b" style="left:0.0px;top:0.0px;width:1.2px;height:1250.0px;background:#95d23a;"></div>
<div class="b" style="left:0.0px;top:1248.8px;width:867.0px;height:1.2px;background:#8ccb3a;"></div>
<svg class="b" style="left:1275.0px;top:177.5px;" width="20" height="20" viewBox="0 0 20 20"><path d="M2 2 L8 8 M2 2 H6.5 M2 2 V6.5 M18 18 L12 12 M18 18 H13.5 M18 18 V13.5" fill="none" stroke="#3a3a3a" stroke-width="1.6" stroke-linecap="round"/></svg>
<svg class="b" style="left:1337.5px;top:179.0px;" width="19" height="19" viewBox="0 0 19 19"><rect x="1" y="1" width="17" height="17" rx="2.5" fill="none" stroke="#3a3a3a" stroke-width="1.5"/><circle cx="6" cy="6" r="1.5" fill="#3a3a3a"/><path d="M1.5 15 L6 10.5 L9.5 13.5 L13 10 L17.5 14" fill="none" stroke="#3a3a3a" stroke-width="1.5"/></svg>
<div class="t" style="left:1368.6px;top:181.0px;font-size:17.6px;line-height:17.6px;color:#3a3a3a;font-weight:400;letter-spacing:0.310px;">Add a Cover</div>
<svg class="b" style="left:1503.0px;top:179.0px;" width="20" height="19" viewBox="0 0 20 19"><rect x="5" y="1" width="10" height="5" rx="1" fill="none" stroke="#3a3a3a" stroke-width="1.5"/><path d="M5 13 H2.5 a1.5 1.5 0 0 1 -1.5 -1.5 V7.5 a1.5 1.5 0 0 1 1.5 -1.5 H17.5 a1.5 1.5 0 0 1 1.5 1.5 V11.5 a1.5 1.5 0 0 1 -1.5 1.5 H15" fill="none" stroke="#3a3a3a" stroke-width="1.5"/><rect x="5" y="10.5" width="10" height="7.5" rx="1" fill="none" stroke="#3a3a3a" stroke-width="1.5"/></svg>
<div class="t" style="left:1534.3px;top:181.0px;font-size:17.6px;line-height:17.6px;color:#3a3a3a;font-weight:400;letter-spacing:0.35px;">Print</div>
<div class="t" style="left:909.7px;top:229.3px;font-size:33px;line-height:33px;color:#222222;font-weight:700;letter-spacing:0.434px;">Incident Management</div>
<svg class="b" style="left:909.0px;top:287.0px;" width="16" height="12" viewBox="0 0 16 12"><path d="M2.5 6.5 L6 9.6 L13.2 2.6" fill="none" stroke="#6dd9a7" stroke-width="2.6" stroke-linecap="round" stroke-linejoin="round"/></svg>
<div class="t" style="left:931.0px;top:286.1px;font-size:17.6px;line-height:17.6px;color:#72d9ab;font-weight:400;letter-spacing:0.077px;">Saved</div>
<svg class="b" style="left:906.0px;top:326.0px;" width="20" height="22" viewBox="0 0 20 22"><path d="M3.5 2.8 H10 a4.1 4.1 0 0 1 0 8.2 H3.5 Z M3.5 11 H11 a4.3 4.3 0 0 1 0 8.6 H3.5 Z" fill="none" stroke="#8d89a2" stroke-width="2.3" stroke-linejoin="round"/></svg>
<svg class="b" style="left:940.0px;top:326.0px;" width="16" height="22" viewBox="0 0 16 22"><path d="M6.2 2.8 H13.8 M2.2 19.6 H9.8 M10.6 3 L6 19.4" fill="none" stroke="#8d89a2" stroke-width="1.7"/></svg>
<svg class="b" style="left:969.0px;top:326.0px;" width="22" height="22" viewBox="0 0 22 22"><path d="M15.8 6 Q14.5 3 11 3 Q6.3 3 6.3 6.5 Q6.3 9.5 11 10.6 M12.5 12 Q16 13 16 16 Q16 19.4 11 19.4 Q7 19.4 5.8 16.3" fill="none" stroke="#8d89a2" stroke-width="1.8" stroke-linecap="round"/><path d="M2 11.3 H20" stroke="#8d89a2" stroke-width="1.6"/></svg>
<svg class="b" style="left:1001.0px;top:326.0px;" width="22" height="22" viewBox="0 0 22 22"><path d="M3.5 2.8 H7.5 M14.5 2.8 H18.5 M5.5 2.8 V12.5 a5.5 5.5 0 0 0 11 0 V2.8" fill="none" stroke="#8d89a2" stroke-width="1.7"/><path d="M2.5 19.8 H19.5" stroke="#8d89a2" stroke-width="1.8"/></svg>
<div class="b" style="left:1029.2px;top:329.0px;width:1.0px;height:18.0px;background:#dedde3;"></div>
<svg class="b" style="left:1038.5px;top:327.0px;" width="18" height="21" viewBox="0 0 18 21"><path d="M9 2 H17 M10.5 2 V20 M14.5 2 V20" fill="none" stroke="#8d89a2" stroke-width="2"/><path d="M10.5 12 H8 a5 5 0 0 1 0 -10 H10.5 Z" fill="none" stroke="#8d89a2" stroke-width="2"/></svg>
<div class="t" style="left:1070.5px;top:329.1px;font-size:18px;line-height:18px;color:#8d89a2;font-weight:400;letter-spacing:-0.5px;-webkit-text-stroke:0.4px #8d89a2;">H1</div>
<div class="b" style="left:1099.6px;top:325.4px;width:31.6px;height:26.6px;background:#e3e3e6;border-radius:4px;"></div>
<div class="t" style="left:1104.5px;top:329.1px;font-size:18px;line-height:18px;color:#2a2550;font-weight:400;letter-spacing:-0.3px;-webkit-text-stroke:0.4px #2a2550;">H2</div>
<div class="t" style="left:1139.5px;top:329.1px;font-size:18px;line-height:18px;color:#8d89a2;font-weight:400;letter-spacing:-0.3px;-webkit-text-stroke:0.4px #8d89a2;">H3</div>
<div class="b" style="left:1170.6px;top:329.0px;width:1.0px;height:18.0px;background:#dedde3;"></div>
<svg class="b" style="left:1179.0px;top:329.0px;" width="20" height="18" viewBox="0 0 20 18"><path d="M7 2.5 L1.5 9 L7 15.5 M13 2.5 L18.5 9 L13 15.5" fill="none" stroke="#8d89a2" stroke-width="1.7"/></svg>
<svg class="b" style="left:1209.0px;top:328.0px;" width="22" height="18" viewBox="0 0 22 18"><path d="M2.2 5.8 A3.9 3.9 0 1 1 9.9 6.6 Q9.6 13 3.6 16.2 Q2.6 16.6 2.3 15.7 Q5.4 12.8 5.9 9.7 Q2.2 9.2 2.2 5.8 Z" fill="#8d89a2"/><path d="M2.2 5.8 A3.9 3.9 0 1 1 9.9 6.6 Q9.6 13 3.6 16.2 Q2.6 16.6 2.3 15.7 Q5.4 12.8 5.9 9.7 Q2.2 9.2 2.2 5.8 Z" transform="translate(10.9,0)" fill="#8d89a2"/></svg>
<svg class="b" style="left:1243.0px;top:329.0px;" width="20" height="18" viewBox="0 0 20 18"><g fill="#8d89a2"><circle cx="2" cy="2.5" r="1.3"/><circle cx="2" cy="9" r="1.3"/><circle cx="2" cy="15.5" r="1.3"/></g><path d="M6 2.5 H19 M6 9 H19 M6 15.5 H19" stroke="#8d89a2" stroke-width="1.7"/></svg>
<svg class="b" style="left:1275.0px;top:328.0px;" width="20" height="20" viewBox="0 0 20 20"><text x="0" y="6" font-family="Liberation Sans" font-size="6.5" fill="#8d89a2">1</text><text x="0" y="12.5" font-family="Liberation Sans" font-size="6.5" fill="#8d89a2">2</text><text x="0" y="19" font-family="Liberation Sans" font-size="6.5" fill="#8d89a2">3</text><path d="M6 3.5 H19 M6 10 H19 M6 16.5 H19" stroke="#8d89a2" stroke-width="1.7"/></svg>
<div class="b" style="left:1302.6px;top:329.0px;width:1.0px;height:18.0px;background:#dedde3;"></div>
<svg class="b" style="left:1311.0px;top:330.0px;" width="18" height="17" viewBox="0 0 18 17"><rect x="0.5" y="0.5" width="17" height="16" rx="1.5" fill="none" stroke="#8d89a2" stroke-width="1"/><rect x="0.5" y="0.5" width="17" height="5" rx="1.5" fill="#8d89a2"/><path d="M6.3 5 V16.5 M11.7 5 V16.5 M0.5 11 H17.5" stroke="#8d89a2" stroke-width="1"/></svg>
<div class="b" style="left:1338.6px;top:329.0px;width:1.0px;height:18.0px;background:#dedde3;"></div>
<svg class="b" style="left:1346.0px;top:328.0px;" width="20" height="20" viewBox="0 0 20 20"><path d="M1.8 -3 H-2.2 A3 3 0 0 0 -2.2 3 H1 A3 3 0 0 0 3.6 1.5" transform="translate(6.8,13.4) rotate(-45)" fill="none" stroke="#8d89a2" stroke-width="1.7" stroke-linecap="round"/><path d="M-1.8 3 H2.2 A3 3 0 0 0 2.2 -3 H-1 A3 3 0 0 0 -3.6 -1.5" transform="translate(13.2,6.6) rotate(-45)" fill="none" stroke="#8d89a2" stroke-width="1.7" stroke-linecap="round"/></svg>
<svg class="b" style="left:1378.5px;top:329.0px;" width="19" height="17" viewBox="0 0 19 17"><rect x="1" y="1" width="17" height="15" rx="2.5" fill="none" stroke="#8d89a2" stroke-width="1.6"/><circle cx="6" cy="5.5" r="1.6" fill="#8d89a2"/><path d="M1 15.5 V13 L5.5 8.5 L9 12 L12.8 7.8 L18 13 V15.5 Z" fill="#8d89a2"/></svg>
<svg class="b" style="left:1411.0px;top:331.0px;" width="19" height="16" viewBox="0 0 19 16"><rect x="1" y="1" width="17" height="14" rx="2.5" fill="none" stroke="#8d89a2" stroke-width="1.7"/><path d="M7.5 5 L12 8 L7.5 11 Z" fill="#8d89a2"/></svg>
<div class="b" style="left:1437.5px;top:329.0px;width:1.0px;height:18.0px;background:#dedde3;"></div>
<svg class="b" style="left:1446.5px;top:328.0px;" width="19" height="20" viewBox="0 0 19 20"><path d="M4 8 Q9.5 3.5 14 6.5 Q18 10 13.5 17" fill="none" stroke="#8d89a2" stroke-width="1.8" stroke-linecap="round"/><path d="M1 8.5 L6.5 3 L7 10 Z" fill="#8d89a2"/></svg>
<svg class="b" style="left:1478.0px;top:328.0px;" width="19" height="20" viewBox="0 0 19 20"><path d="M15 8 Q9.5 3.5 5 6.5 Q1 10 5.5 17" fill="none" stroke="#8d89a2" stroke-width="1.8" stroke-linecap="round"/><path d="M18 8.5 L12.5 3 L12 10 Z" fill="#8d89a2"/></svg>
<div class="b" style="left:1505.6px;top:329.0px;width:1.0px;height:18.0px;background:#dedde3;"></div>
<svg class="b" style="left:1514.0px;top:327.0px;" width="19" height="19" viewBox="0 0 19 19"><circle cx="9.5" cy="9.5" r="8.3" fill="none" stroke="#8d89a2" stroke-width="1.6"/><circle cx="6.5" cy="7.5" r="1.2" fill="#8d89a2"/><circle cx="12.5" cy="7.5" r="1.2" fill="#8d89a2"/><path d="M5.5 11.5 Q9.5 15.5 13.5 11.5" fill="none" stroke="#8d89a2" stroke-width="1.6" stroke-linecap="round"/></svg>
<div class="t" style="left:909.5px;top:393.0px;font-size:26.5px;line-height:26.5px;color:#222222;font-weight:700;letter-spacing:0.262px;">Table of Contents</div>
<div class="b" style="left:909.8px;top:449.8px;width:6.2px;height:6.2px;border-radius:50%;background:#222;"></div>
<div class="t" style="left:929.0px;top:443.2px;font-size:18px;line-height:18px;color:#222222;font-weight:700;letter-spacing:-0.053px;">Introduction</div>
<div class="b" style="left:909.8px;top:476.0px;width:6.2px;height:6.2px;border-radius:50%;background:#222;"></div>
<div class="t" style="left:929.0px;top:469.4px;font-size:18px;line-height:18px;color:#222222;font-weight:700;letter-spacing:-0.233px;">Scope</div>
<div class="b" style="left:909.8px;top:502.2px;width:6.2px;height:6.2px;border-radius:50%;background:#222;"></div>
<div class="t" style="left:929.0px;top:495.5px;font-size:18px;line-height:18px;color:#222222;font-weight:700;letter-spacing:-0.080px;">Terms and Definitions</div>
<div class="b" style="left:909.8px;top:528.4px;width:6.2px;height:6.2px;border-radius:50%;background:#222;"></div>
<div class="t" style="left:929.0px;top:521.7px;font-size:18px;line-height:18px;color:#222222;font-weight:700;letter-spacing:-0.266px;">Policy</div>
<div class="b" style="left:929.8px;top:554.6px;width:6.2px;height:6.2px;border-radius:50%;background:#222;"></div>
<div class="t" style="left:949.0px;top:547.9px;font-size:18px;line-height:18px;color:#3a3a3a;font-weight:400;letter-spacing:0.291px;">Leadership commitment and organisational culture</div>
<div class="b" style="left:929.8px;top:580.8px;width:6.2px;height:6.2px;border-radius:50%;background:#222;"></div>
<div class="t" style="left:949.0px;top:574.1px;font-size:18px;line-height:18px;color:#3a3a3a;font-weight:400;letter-spacing:0.230px;">Responding to incidents</div>
<div class="b" style="left:929.8px;top:606.9px;width:6.2px;height:6.2px;border-radius:50%;background:#222;"></div>
<div class="t" style="left:949.0px;top:600.3px;font-size:18px;line-height:18px;color:#3a3a3a;font-weight:400;letter-spacing:0.292px;">Reporting and recording incidents</div>
<div class="b" style="left:929.8px;top:633.1px;width:6.2px;height:6.2px;border-radius:50%;background:#222;"></div>
<div class="t" style="left:949.0px;top:626.5px;font-size:18px;line-height:18px;color:#3a3a3a;font-weight:400;letter-spacing:0.269px;">Investigating and analysing incidents</div>
<div class="b" style="left:929.8px;top:659.3px;width:6.2px;height:6.2px;border-radius:50%;background:#222;"></div>
<div class="t" style="left:949.0px;top:652.7px;font-size:18px;line-height:18px;color:#3a3a3a;font-weight:400;letter-spacing:0.295px;">Implementing actions</div>
<div class="b" style="left:929.8px;top:685.5px;width:6.2px;height:6.2px;border-radius:50%;background:#222;"></div>
<div class="t" style="left:949.0px;top:678.9px;font-size:18px;line-height:18px;color:#3a3a3a;font-weight:400;letter-spacing:0.240px;">Closing the loop</div>
<div class="b" style="left:909.8px;top:711.7px;width:6.2px;height:6.2px;border-radius:50%;background:#222;"></div>
<div class="t" style="left:929.0px;top:705.1px;font-size:18px;line-height:18px;color:#222222;font-weight:700;letter-spacing:-0.106px;">Procedure</div>
<div class="b" style="left:929.8px;top:737.9px;width:6.2px;height:6.2px;border-radius:50%;background:#222;"></div>
<div class="t" style="left:949.0px;top:731.3px;font-size:18px;line-height:18px;color:#222222;font-weight:700;letter-spacing:-0.026px;">A. General Incident Management</div>
<div class="b" style="left:949.8px;top:764.1px;width:6.2px;height:6.2px;border-radius:50%;background:#222;"></div>
<div class="t" style="left:969.0px;top:757.4px;font-size:18px;line-height:18px;color:#3a3a3a;font-weight:400;letter-spacing:0.290px;">Prevention of incidents</div>
<div class="b" style="left:949.8px;top:790.3px;width:6.2px;height:6.2px;border-radius:50%;background:#222;"></div>
<div class="t" style="left:969.0px;top:783.6px;font-size:18px;line-height:18px;color:#3a3a3a;font-weight:400;letter-spacing:0.317px;">Identification of incidents and near misses</div>
<div class="b" style="left:949.8px;top:816.5px;width:6.2px;height:6.2px;border-radius:50%;background:#222;"></div>
<div class="t" style="left:969.0px;top:809.8px;font-size:18px;line-height:18px;color:#3a3a3a;font-weight:400;letter-spacing:0.257px;">Responding to incidents</div>
<div class="b" style="left:949.8px;top:842.6px;width:6.2px;height:6.2px;border-radius:50%;background:#222;"></div>
<div class="t" style="left:969.0px;top:836.0px;font-size:18px;line-height:18px;color:#3a3a3a;font-weight:400;letter-spacing:0.285px;">Reporting and recording incidents</div>
<div class="b" style="left:949.8px;top:868.8px;width:6.2px;height:6.2px;border-radius:50%;background:#222;"></div>
<div class="t" style="left:969.0px;top:862.2px;font-size:18px;line-height:18px;color:#3a3a3a;font-weight:400;letter-spacing:0.284px;">Assessing and investigating incidents</div>
<div class="b" style="left:949.8px;top:895.0px;width:6.2px;height:6.2px;border-radius:50%;background:#222;"></div>
<div class="t" style="left:969.0px;top:888.4px;font-size:18px;line-height:18px;color:#3a3a3a;font-weight:400;letter-spacing:0.115px;">Remedial actions</div>
<div class="b" style="left:949.8px;top:921.2px;width:6.2px;height:6.2px;border-radius:50%;background:#222;"></div>
<div class="t" style="left:969.0px;top:914.6px;font-size:18px;line-height:18px;color:#3a3a3a;font-weight:400;letter-spacing:0.254px;">Closing the loop</div>
<div class="b" style="left:949.8px;top:947.4px;width:6.2px;height:6.2px;border-radius:50%;background:#222;"></div>
<div class="t" style="left:969.0px;top:940.8px;font-size:18px;line-height:18px;color:#3a3a3a;font-weight:400;letter-spacing:0.271px;">Reviewing and improving the incident management system</div>
<div class="b" style="left:929.8px;top:973.6px;width:6.2px;height:6.2px;border-radius:50%;background:#222;"></div>
<div class="t" style="left:949.0px;top:967.0px;font-size:18px;line-height:18px;color:#222222;font-weight:700;letter-spacing:-0.192px;">B. The Serious Incident Response Scheme</div>
<div class="b" style="left:949.8px;top:999.8px;width:6.2px;height:6.2px;border-radius:50%;background:#222;"></div>
<div class="t" style="left:969.0px;top:993.2px;font-size:18px;line-height:18px;color:#3a3a3a;font-weight:400;letter-spacing:0.263px;">Serious Incident Types</div>
<div class="b" style="left:949.8px;top:1026.0px;width:6.2px;height:6.2px;border-radius:50%;background:#222;"></div>
<div class="t" style="left:969.0px;top:1019.3px;font-size:18px;line-height:18px;color:#3a3a3a;font-weight:400;letter-spacing:0.316px;">Assessing and classifying incidents</div>
<div class="b" style="left:949.8px;top:1052.2px;width:6.2px;height:6.2px;border-radius:50%;background:#222;"></div>
<div class="t" style="left:969.0px;top:1045.5px;font-size:18px;line-height:18px;color:#3a3a3a;font-weight:400;letter-spacing:0.369px;">Serious incident reporting notification timeframes</div>
<div class="b" style="left:949.8px;top:1078.4px;width:6.2px;height:6.2px;border-radius:50%;background:#222;"></div>
<div class="t" style="left:969.0px;top:1071.7px;font-size:18px;line-height:18px;color:#3a3a3a;font-weight:400;letter-spacing:0.377px;">Notifying serious reportable incidents</div>
<div class="b" style="left:949.8px;top:1104.6px;width:6.2px;height:6.2px;border-radius:50%;background:#222;"></div>
<div class="t" style="left:969.0px;top:1097.9px;font-size:18px;line-height:18px;color:#3a3a3a;font-weight:400;letter-spacing:0.317px;">Investigating serious reportable incidents</div>
<div class="b" style="left:949.8px;top:1130.7px;width:6.2px;height:6.2px;border-radius:50%;background:#222;"></div>
<div class="t" style="left:969.0px;top:1124.1px;font-size:18px;line-height:18px;color:#3a3a3a;font-weight:400;letter-spacing:0.153px;">Records management</div>
<div class="b" style="left:929.8px;top:1156.9px;width:6.2px;height:6.2px;border-radius:50%;background:#222;"></div>
<div class="t" style="left:949.0px;top:1150.3px;font-size:18px;line-height:18px;color:#222222;font-weight:700;letter-spacing:0.054px;">C. Staff Incident Management</div>
<div class="b" style="left:929.8px;top:1183.1px;width:6.2px;height:6.2px;border-radius:50%;background:#222;"></div>
<div class="t" style="left:949.0px;top:1176.5px;font-size:18px;line-height:18px;color:#222222;font-weight:700;letter-spacing:-0.096px;">D. Other Mandatory Reporting Requirements</div>
<div class="b" style="left:909.8px;top:1209.3px;width:6.2px;height:6.2px;border-radius:50%;background:#222;"></div>
<div class="t" style="left:929.0px;top:1202.7px;font-size:18px;line-height:18px;color:#222222;font-weight:700;letter-spacing:-0.039px;">Relevant Legislation/Guidance Materials/Program Requirements</div>
<div class="b" style="left:909.8px;top:1235.5px;width:6.2px;height:6.2px;border-radius:50%;background:#222;"></div>
<div class="t" style="left:929.0px;top:1228.9px;font-size:18px;line-height:18px;color:#222222;font-weight:700;letter-spacing:0.047px;">Relevant Standards/Outcomes/Actions</div>
<svg class="b" style="left:0;top:0" width="1563" height="1250" viewBox="0 0 1563 1250"><path d="M195.0 26.3 L249.0 0.5 L263.1 2.5 L223.8 23.0 L225.9 23.5 L228.6 24.2 L231.8 24.9 L235.3 25.7 L239.2 26.6 L243.3 27.6 L247.5 28.7 L251.7 29.9 L255.9 31.2 L260.0 32.6 L264.0 34.1 L268.2 35.7 L272.4 37.3 L276.8 39.1 L281.2 41.0 L285.6 42.9 L290.0 45.0 L294.4 47.1 L298.8 49.4 L303.2 51.7 L307.5 54.1 L311.9 56.7 L316.2 59.3 L320.6 62.1 L325.0 64.9 L329.3 67.8 L333.6 70.8 L337.9 74.0 L342.2 77.2 L346.4 80.5 L350.6 83.9 L354.9 87.5 L359.1 91.2 L363.3 95.0 L367.5 98.9 L371.6 102.9 L375.7 106.9 L379.6 111.0 L383.4 115.0 L387.0 119.1 L390.5 123.2 L393.9 127.4 L397.1 131.6 L400.3 135.9 L403.4 140.2 L406.3 144.5 L409.2 148.8 L412.0 153.1 L414.6 157.4 L417.2 161.7 L419.7 166.1 L422.2 170.7 L424.6 175.4 L426.9 180.1 L429.1 184.8 L431.2 189.3 L433.1 193.6 L434.7 197.6 L436.1 201.1 L437.3 204.2 L438.1 206.8 L438.6 209.0 L438.8 210.8 L438.8 212.3 L438.7 213.6 L438.4 214.7 L438.1 215.6 L437.8 216.3 L437.6 217.0 L437.5 217.7 L437.0 216.5 L436.5 215.1 L436.0 213.5 L435.3 211.7 L434.6 209.7 L433.7 207.5 L432.6 205.0 L431.4 202.4 L430.0 199.5 L428.4 196.4 L426.5 193.0 L424.4 189.1 L422.0 184.9 L419.5 180.5 L416.8 175.9 L414.0 171.3 L411.2 166.7 L408.3 162.2 L405.4 157.8 L402.6 153.8 L399.7 150.0 L396.8 146.2 L393.7 142.4 L390.6 138.8 L387.5 135.2 L384.4 131.7 L381.3 128.4 L378.2 125.2 L375.3 122.1 L372.4 119.1 L369.7 116.4 L367.2 113.9 L364.8 111.6 L362.5 109.5 L360.2 107.4 L357.8 105.4 L355.3 103.3 L352.6 101.1 L349.7 98.8 L346.4 96.3 L342.8 93.5 L338.9 90.6 L334.7 87.4 L330.4 84.2 L325.9 81.0 L321.3 77.8 L316.7 74.6 L312.1 71.6 L307.6 68.7 L303.2 66.1 L298.9 63.7 L294.5 61.4 L290.1 59.2 L285.7 57.1 L281.3 55.1 L277.0 53.2 L272.7 51.5 L268.4 49.8 L264.1 48.1 L260.0 46.6 L255.8 45.1 L251.3 43.7 L246.8 42.4 L242.2 41.2 L237.8 40.1 L233.6 39.0 L229.7 38.1 L226.2 37.3 L223.3 36.6 L221.0 36.0 L222.7 37.5 L225.0 39.6 L227.7 42.0 L230.3 44.6 L232.6 47.0 L234.9 49.5 L237.4 52.4 L240.4 56.2 L244.6 61.8 L249.7 68.8 L254.4 75.4 L257.7 79.9 L247.6 79.4 L244.5 75.4 L240.0 69.6 L235.0 63.2 L230.3 57.6 L226.2 52.9 L222.1 48.5 L218.1 44.3 L213.8 40.3 L208.8 36.2 L203.4 32.2 L198.4 28.7 L195.0 26.3 Z" fill="#ff0000"/></svg>
</body></html>
